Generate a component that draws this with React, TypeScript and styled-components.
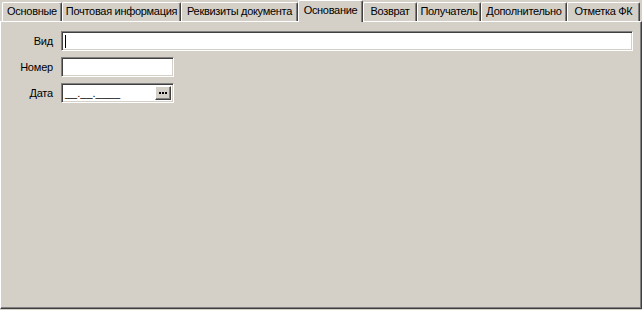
import React from 'react';
import styled, { createGlobalStyle } from 'styled-components';

const GlobalStyle = createGlobalStyle`
  html, body {
    margin: 0;
    padding: 0;
    background: #d4d0c8;
  }
  body {
    font-family: "Liberation Sans", Arial, sans-serif;
    font-size: 11px;
    color: #000;
  }
`;

const SWindow = styled.div`
  width: 642px;
  height: 310px;
  display: flex;
  flex-direction: column;
  background: #d4d0c8;
  overflow: hidden;
`;

const STabStrip = styled.div`
  display: flex;
  align-items: flex-end;
  height: 21px;
  padding-left: 2px;
  position: relative;
  z-index: 1;
`;

const STab = styled.div<{ $width: number; $active?: boolean }>`
  box-sizing: border-box;
  width: ${({ $width }) => $width}px;
  height: ${({ $active }) => ($active ? 22 : 19)}px;
  margin-bottom: ${({ $active }) => ($active ? -1 : 0)}px;
  padding-top: ${({ $active }) => ($active ? 3 : 2)}px;
  display: flex;
  justify-content: center;
  align-items: flex-start;
  background: #d4d0c8;
  border-top: 1px solid #ffffff;
  border-left: 1px solid #ffffff;
  border-right: 1px solid #404040;
  box-shadow: inset -1px 0 0 #808080;
  border-radius: 2px 2px 0 0;
  white-space: nowrap;
  font-size: 11px;
  letter-spacing: -0.3px;
  line-height: 13px;
  cursor: default;
`;

const SPanel = styled.div`
  flex: 1;
  box-sizing: border-box;
  border-top: 1px solid #ffffff;
  border-left: 1px solid #ffffff;
  border-right: 1px solid #404040;
  border-bottom: 1px solid #404040;
  box-shadow: inset -1px -1px 0 #808080;
  margin-bottom: 1px;
  padding: 9px 8px 0 0;
`;

const SForm = styled.div`
  display: grid;
  grid-template-columns: 52px 1fr;
  column-gap: 8px;
  row-gap: 6px;
  align-items: center;
`;

const SLabel = styled.label`
  text-align: right;
  font-size: 11px;
  letter-spacing: -0.2px;
  line-height: 13px;
`;

const SField = styled.div<{ $width?: number }>`
  box-sizing: border-box;
  position: relative;
  height: 20px;
  width: ${({ $width }) => ($width ? `${$width}px` : '100%')};
  background: #ffffff;
  border-top: 1px solid #808080;
  border-left: 1px solid #808080;
  border-right: 1px solid #ffffff;
  border-bottom: 1px solid #ffffff;
  box-shadow: inset 1px 1px 0 #404040, inset -1px -1px 0 #d4d0c8;
  display: flex;
  align-items: center;
  padding-left: 3px;
  font-size: 11px;
`;

const SCaret = styled.span`
  width: 1px;
  height: 13px;
  background: #000;
`;

const SMask = styled.span`
  line-height: 13px;
`;

const SDotsButton = styled.div`
  position: absolute;
  top: 2px;
  right: 2px;
  bottom: 2px;
  width: 16px;
  box-sizing: border-box;
  background: #d4d0c8;
  border-top: 1px solid #ffffff;
  border-left: 1px solid #ffffff;
  border-right: 1px solid #404040;
  border-bottom: 1px solid #404040;
  box-shadow: inset -1px -1px 0 #808080;
  display: flex;
  justify-content: center;
  align-items: center;
  gap: 1px;
`;

const SDot = styled.span`
  width: 2px;
  height: 2px;
  background: #000;
`;

const tabs = [
  { title: 'Основные', width: 60 },
  { title: 'Почтовая информация', width: 119 },
  { title: 'Реквизиты документа', width: 117 },
  { title: 'Основание', width: 65, active: true },
  { title: 'Возврат', width: 54 },
  { title: 'Получатель', width: 64 },
  { title: 'Дополнительно', width: 86 },
  { title: 'Отметка ФК', width: 73 },
];

export default function App() {
  return (
    <>
      <GlobalStyle />
      <SWindow>
        <STabStrip>
          {tabs.map((t) => (
            <STab key={t.title} $width={t.width} $active={t.active}>
              {t.title}
            </STab>
          ))}
        </STabStrip>
        <SPanel>
          <SForm>
            <SLabel>Вид</SLabel>
            <SField>
              <SCaret />
            </SField>
            <SLabel>Номер</SLabel>
            <SField $width={113} />
            <SLabel>Дата</SLabel>
            <SField $width={113}>
              <SMask>__.__.____</SMask>
              <SDotsButton>
                <SDot />
                <SDot />
                <SDot />
              </SDotsButton>
            </SField>
          </SForm>
        </SPanel>
      </SWindow>
    </>
  );
}
